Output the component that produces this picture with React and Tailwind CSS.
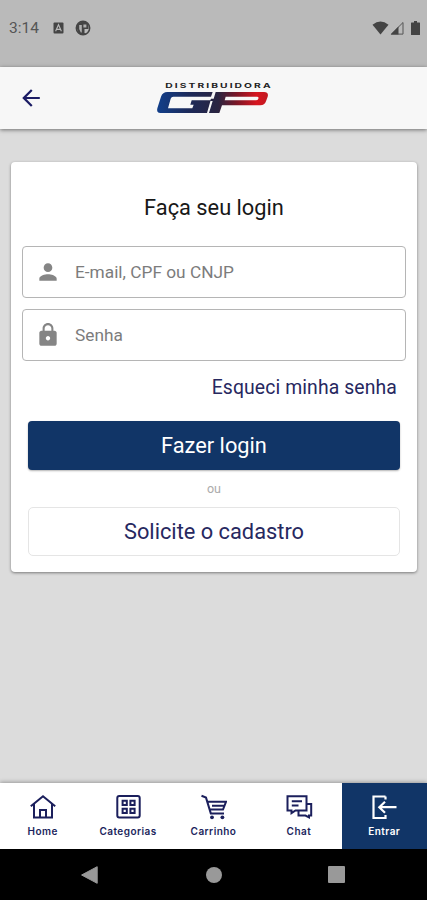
import React from 'react';
import { MdPerson, MdLock, MdArrowBack } from 'react-icons/md';

function StatusBar() {
  return (
    <div className="h-[67px] shrink-0 bg-[#bababa] flex items-start justify-between pl-[9px] pr-[7px] pt-[19px] text-[#444444]">
      <div className="flex items-center h-[17px]">
        <span className="w-[44px] pt-[2px] text-[15.5px] leading-[17px] text-[#555555]">3:14</span>
        <svg className="w-[11px] h-[12px]" viewBox="0 0 11 12">
          <rect x="0.5" y="0.5" width="10" height="11" rx="1" fill="#444444" />
          <path d="M2.6 9.2 5.5 2.7l2.9 6.5M3.6 7.4h3.8" fill="none" stroke="#bababa" strokeWidth="1.1" />
        </svg>
        <svg className="w-[16px] h-[16px] ml-[11px]" viewBox="0 0 16 16">
          <circle cx="8" cy="8" r="6.7" fill="none" stroke="#444444" strokeWidth="1.5" />
          <path d="M2 4.5Q8-1 13.5 4V9H9.5V13L12 14H4L2 9Z" fill="#444444" />
          <path d="M4.2 5h2.6v7.6H5.8L4.2 9ZM8.4 4.6h3v2.8h-3Z" fill="#b0b0b0" />
        </svg>
      </div>
      <div className="flex items-center h-[17px]">
        <svg className="w-[17px] h-[14px]" viewBox="0 0 17 14">
          <path d="M0.5 3.7Q8.5-2.7 16.5 3.7L8.5 13.6Z" fill="#444444" />
        </svg>
        <svg className="w-[14px] h-[14px] ml-[1px]" viewBox="0 0 14 14">
          <path d="M1.4 13.1H13V1.5Z" fill="none" stroke="#555555" strokeWidth="1" />
          <path d="M0.6 13.5 8.5 5.6V13.5Z" fill="#444444" />
        </svg>
        <svg className="w-[9px] h-[14px] ml-[7px]" viewBox="0 0 9 14">
          <path d="M3 0h3v1.5h2.5q.5 0 .5.5v11.5q0 .5-.5.5h-8q-.5 0-.5-.5V2q0-.5.5-.5H3Z" fill="#444444" />
        </svg>
      </div>
    </div>
  );
}

function Logo() {
  return (
    <svg className="w-[119px] h-[34px]" viewBox="75 48 357 102">
      <defs>
        <linearGradient id="gp" gradientUnits="userSpaceOnUse" x1="82" y1="0" x2="414" y2="0">
          <stop offset="0" stopColor="#123f8a" />
          <stop offset="0.28" stopColor="#1c2a5a" />
          <stop offset="0.55" stopColor="#2a2440" />
          <stop offset="0.72" stopColor="#7c1626" />
          <stop offset="0.9" stopColor="#d8151f" />
          <stop offset="1" stopColor="#c01a22" />
        </linearGradient>
      </defs>
      <text x="106" y="70" textLength="322" lengthAdjust="spacingAndGlyphs" letterSpacing="4" fontSize="20" fontWeight="700" fill="#222222" className="font-['Inter',sans-serif]">
        DISTRIBUIDORA
      </text>
      <g fill="url(#gp)">
        <path d="M112 81H248L243 95H130Q124 95 122 101L114 130H187L191 119H181L185 106H242L231 144H92Q78 144 82 130L93 95Q98 81 112 81Z" />
        <path fillRule="evenodd" d="M257 81H402Q417 81 413 95L408 109Q404 121 391 121H276L268 144H237L248 108H240L243 101H251ZM287 95 284 106H378Q383 106 385 101Q387 95 381 95Z" />
      </g>
    </svg>
  );
}

function Header() {
  return (
    <header className="relative h-[62px] shrink-0 bg-[#f7f7f7] flex items-center px-[21px] shadow-[0_1px_4px_rgba(0,0,0,0.5)]">
      <MdArrowBack className="w-[20px] h-[22px] text-[#1b1c64]" viewBox="3 2 18 20" />
      <div className="ml-[114px]">
        <Logo />
      </div>
    </header>
  );
}

function Field({ icon: Icon, label }) {
  return (
    <div className="h-[52px] border border-[#b5b5b5] rounded-[4px] flex items-center pl-[12px]">
      <Icon className="w-[26px] h-[26px] text-[#858585]" />
      <span className="ml-[14px] text-[17.3px] leading-[22px] text-[#7c7c7c]">{label}</span>
    </div>
  );
}

function LoginCard() {
  return (
    <section className="mx-[10px] ml-[11px] mt-[33px] h-[410px] bg-white rounded-[4px] px-[11px] flex flex-col shadow-[0_1px_3px_rgba(0,0,0,0.45)]">
      <h1 className="mt-[33px] h-[26px] text-center text-[21.8px] leading-[26px] text-[#181818]">Faça seu login</h1>
      <div className="mt-[25px] flex flex-col gap-[11px]">
        <Field icon={MdPerson} label="E-mail, CPF ou CNJP" />
        <Field icon={MdLock} label="Senha" />
      </div>
      <a className="mt-[14px] mr-[9px] h-[26px] text-right text-[19.4px] leading-[26px] tracking-[0.1px] text-[#27285f]">
        Esqueci minha senha
      </a>
      <button className="mt-[20px] mx-[6px] h-[49px] pt-[2px] rounded-[4px] bg-[#113567] text-white text-[21.8px] shadow-[0_1px_2px_rgba(0,0,0,0.3)]">
        Fazer login
      </button>
      <span className="h-[37px] text-center text-[12.5px] leading-[37px] text-[#ababab]">ou</span>
      <button className="mx-[6px] h-[49px] pt-[2px] rounded-[5px] border border-[#e5e5e5] text-[#27285f] text-[21.8px]">
        Solicite o cadastro
      </button>
    </section>
  );
}

function TabIcon({ children }) {
  return (
    <svg className="w-[28px] h-[26px]" viewBox="0 0 28 26" fill="none" stroke="currentColor" strokeWidth="2">
      {children}
    </svg>
  );
}

const tabs = [
  {
    label: 'Home',
    icon: <path d="M1.8 12.3 14 2.2 26.2 12.3M5 10V23.4H23V10M11 23.4V16H17V23.4" />,
  },
  {
    label: 'Categorias',
    icon: (
      <>
        <rect x="3.3" y="2" width="22.4" height="21.6" rx="2" />
        <path d="M8.6 6.8h4.2v4.2h-4.2ZM16.4 6.8h4.2v4.2h-4.2ZM8.6 14.8h4.2v4.2h-4.2ZM16.4 14.8h4.2v4.2h-4.2Z" />
      </>
    ),
  },
  {
    label: 'Carrinho',
    icon: (
      <>
        <path d="M2.5 1.8 7 3.6 11.8 19.4H25M8.5 7.8H27L24 15.6H10.6M13 11.7H25.4" />
        <circle cx="13" cy="23.3" r="1.9" fill="currentColor" stroke="none" />
        <circle cx="23.4" cy="23.3" r="1.9" fill="currentColor" stroke="none" />
      </>
    ),
  },
  {
    label: 'Chat',
    icon: (
      <>
        <path d="M2.5 2.3H21.5V16.5H10.5L6.5 19.2V16.5H2.5Z" />
        <path d="M6.8 7.3H17M6.8 11.5H13.5M21.5 10H26.2V21.5H24V23.4L20.5 21.5H13.5V16.5" />
      </>
    ),
  },
  {
    label: 'Entrar',
    active: true,
    icon: <path d="M15.5 2.5H3.5V24H15.5V21M15.5 2.5V5.5M26.5 13.2H9.5M15 7.7 9.3 13.2 15 18.7" strokeWidth="2.2" />,
  },
];

function TabBar() {
  return (
    <nav className="relative h-[66px] shrink-0 bg-white grid grid-cols-5 shadow-[0_-1px_4px_rgba(0,0,0,0.3)]">
      {tabs.map((tab) => (
        <div
          key={tab.label}
          className={`flex flex-col items-center pt-[11px] ${tab.active ? 'bg-[#113567] text-white' : 'text-[#1b1f5c]'}`}
        >
          <TabIcon>{tab.icon}</TabIcon>
          <span className="mt-[5px] text-[10px] leading-[13px] font-semibold font-['Inter',sans-serif] tracking-[0.45px]">{tab.label}</span>
        </div>
      ))}
    </nav>
  );
}

function AndroidNav() {
  return (
    <div className="h-[51px] shrink-0 bg-black flex items-center justify-between pl-[81px] pr-[82px]">
      <svg className="w-[17px] h-[18px]" viewBox="0 0 17 18">
        <path d="M16.2 0.7V17.3L0.6 9Z" fill="#999999" stroke="#999999" strokeLinejoin="round" />
      </svg>
      <div className="ml-[1px] w-[16px] h-[16px] rounded-full bg-[#999999]" />
      <div className="w-[17px] h-[17px] rounded-[1px] bg-[#999999]" />
    </div>
  );
}

export default function App() {
  return (
    <div className="w-full h-[900px] flex flex-col overflow-hidden bg-[#dcdcdc] font-['Roboto',sans-serif]">
      <StatusBar />
      <Header />
      <main className="flex-1 min-h-0">
        <LoginCard />
      </main>
      <TabBar />
      <AndroidNav />
    </div>
  );
}
